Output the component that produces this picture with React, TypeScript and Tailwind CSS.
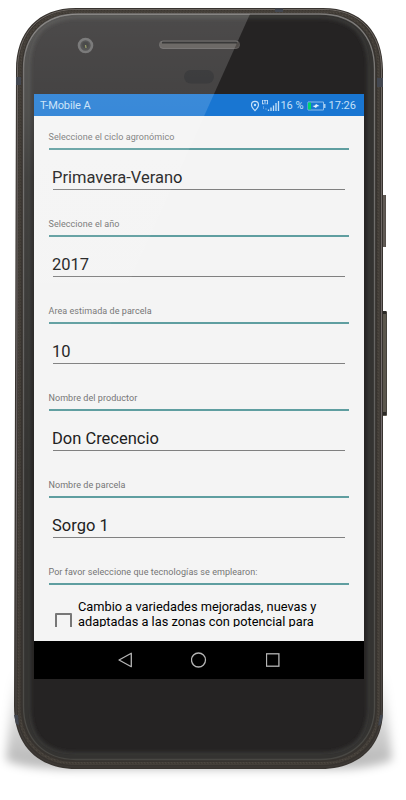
import React from "react";

const fields = [
  { label: "Seleccione el ciclo agronómico", value: "Primavera-Verano" },
  { label: "Seleccione el año", value: "2017" },
  { label: "Area estimada de parcela", value: "10" },
  { label: "Nombre del productor", value: "Don Crecencio" },
  { label: "Nombre de parcela", value: "Sorgo 1" },
];

function PhoneShell() {
  return (
    <svg className="absolute inset-0" width="406" height="800" viewBox="0 0 406 800">
      <defs>
        <filter id="soft" x="-10%" y="-50%" width="120%" height="200%">
          <feGaussianBlur stdDeviation="5" />
        </filter>
        <filter id="edge">
          <feGaussianBlur stdDeviation="2" />
        </filter>
        <pattern id="grain" width="3" height="3" patternUnits="userSpaceOnUse">
          <rect width="3" height="3" fill="#443f39" />
          <rect width="1" height="1" fill="#4d4740" />
          <rect x="2" y="1" width="1" height="1" fill="#3c3731" />
        </pattern>
        <linearGradient id="bevel" x1="0" y1="0" x2="0" y2="1">
          <stop stopColor="#7d7b79" />
          <stop offset=".6" stopColor="#5e5d5b" />
          <stop offset="1" stopColor="#484743" />
        </linearGradient>
        <linearGradient id="rim" x1="0" y1="0" x2="0" y2="1">
          <stop stopColor="#6b6560" />
          <stop offset=".6" stopColor="#756e70" />
          <stop offset="1" stopColor="#3e3935" />
        </linearGradient>
        <linearGradient id="shadow" x1="0" y1="670" x2="0" y2="772" gradientUnits="userSpaceOnUse">
          <stop stopColor="#000" stopOpacity="0" />
          <stop offset="1" stopColor="#000" stopOpacity=".3" />
        </linearGradient>
        <clipPath id="page">
          <rect width="406" height="780" />
        </clipPath>
        <clipPath id="glass">
          <path d="M80 16H318Q370 16 370 68V706Q370 755 320 755H76Q28 755 28 706V68Q28 16 80 16Z" />
        </clipPath>
      </defs>
      <g clipPath="url(#page)">
        <path d="M14 670H384L392 760Q370 769 330 769H70Q20 768 6 760Z" fill="url(#shadow)" filter="url(#soft)" />
      </g>
      <rect x="381" y="195" width="5" height="52" fill="#605a55" />
      <rect x="385" y="195" width="1" height="52" fill="#56504b" />
      <rect x="381" y="311" width="6" height="105" rx="1" fill="#5b574d" />
      <rect x="386" y="312" width="1" height="103" fill="#45423c" />
      <rect x="383" y="311" width="3" height="3" fill="#2b2926" />
      <rect x="383" y="412" width="3" height="3" fill="#2b2926" />
      <path d="M76 8H323C361 8 383 32 383 70V710C383 747 358 769 321 769H76C38 769 14 745 14 706L16 70C16 32 38 8 76 8Z" fill="#37332f" />
      <path d="M76 9.500H323C360 9.500 381.500 33 381.500 70V710C381.500 746 357 767 321 767H76C39 767 16 744 16 706L17.500 70C17.500 33 39 9.500 76 9.500Z" fill="none" stroke="url(#rim)" strokeWidth="1" />
      <path d="M77 11.500H322C357 11.500 378.500 34 378.500 70V708C378.500 742 355 763.500 321 763.500H76C42 763.500 19 742 19 706L20 70C20 34 42 11.500 77 11.500Z" fill="none" stroke="url(#grain)" strokeWidth="3" />
      <path d="M78 14H320C354 14 374.500 35 374.500 69V707C374.500 739 352 759.500 320 759.500H76C44 759.500 23.500 739 23.500 706V69C23.500 35 44 14 78 14Z" fill="#343331" stroke="url(#bevel)" strokeWidth="1.300" />
      <path d="M80 16H318Q370 16 370 68V706Q370 755 320 755H76Q28 755 28 706V68Q28 16 80 16Z" fill="#252323" />
      <g clipPath="url(#glass)">
        <path d="M80 16H318Q370 16 370 68V706Q370 755 320 755H76Q28 755 28 706V68Q28 16 80 16Z" fill="none" stroke="#403f3d" strokeWidth="4" filter="url(#edge)" />
      </g>
      <path d="M275 8.500H283V12H275ZM16 77H21V85H16ZM377 78H383V87H377ZM14 715H18L19 725L16 724ZM380 715H383L381 724L378 726Z" fill="#434750" />
      <rect x="160" y="41.500" width="79" height="7" rx="3" fill="#504c49" />
      <path d="M162 42.500H237" stroke="#111" strokeWidth="2" />
      <rect x="159.500" y="41" width="80" height="7.500" rx="3.500" fill="none" stroke="#706d6b" strokeWidth=".7" />
      <rect x="184" y="70" width="30" height="13.500" rx="6.700" fill="#19191b" />
      <circle cx="85.500" cy="45.500" r="6.500" fill="#343434" stroke="#616161" strokeWidth="2.600" />
      <circle cx="85.500" cy="45" r="3.200" fill="#272727" />
      <path d="M85.500 45l.5 3" stroke="#858c4c" strokeWidth="1.300" />
    </svg>
  );
}

function GlassReflection() {
  return (
    <svg className="pointer-events-none absolute inset-0" width="406" height="800" viewBox="0 0 406 800">
      <defs>
        <linearGradient id="shine" x1="0" y1="14" x2="0" y2="480" gradientUnits="userSpaceOnUse">
          <stop stopColor="#fff" stopOpacity=".18" />
          <stop offset=".21" stopColor="#fff" stopOpacity=".14" />
          <stop offset=".35" stopColor="#fff" stopOpacity=".07" />
          <stop offset="1" stopColor="#fff" stopOpacity="0" />
        </linearGradient>
      </defs>
      <path d="M78 14H250L34 494L24 470V68C24 35 44 14 78 14Z" fill="url(#shine)" />
    </svg>
  );
}

function StatusBar() {
  return (
    <div className="flex h-[22px] shrink-0 items-center bg-[#1976d2] pl-[6px] pr-[7.5px] text-[11px] leading-none text-[#c5e0f8]">
      <span className="mt-px tracking-[-0.1px]">T-Mobile A</span>
      <svg className="ml-auto mt-px" width="30" height="12" viewBox="0 0 30 12" fill="none" stroke="#c5e0f8">
        <path d="M5 10.600C2.500 8 1.500 6.700 1.500 4.900a3.500 3.500 0 0 1 7 0C8.500 6.700 7.500 8 5 10.600Z" strokeWidth="1.200" />
        <circle cx="5" cy="5" r="1.200" fill="#c5e0f8" stroke="none" />
        <path d="M12.500 0V4M12 3.800H14M13.500 .5H16.500M15 .5V4.300M17.500 .5V4M16.500 3.800H18M16.500 .5H18" strokeWidth=".9" />
        <path d="M13.500 6v3M16 8v2" opacity=".4" />
        <path d="M18.500 9.500v1.500M21 7.500v3.500M23.500 5.500v5.500M26 3v8M28.500 1v10" strokeWidth="1.300" />
      </svg>
      <span className="mt-px whitespace-nowrap">16 %</span>
      <svg className="ml-[3px] mt-px" width="19" height="10" viewBox="0 0 19 10">
        <path d="M1 1H16.500V9H1Z" fill="none" stroke="#8dbdea" />
        <path d="M1 1.500H4V8.500H1Z" fill="#00d66b" />
        <path d="M17 3H18.500V7H17" fill="#a7ceef" />
        <path d="M5.500 5L8 4.500L9 3L12.500 5L10 5.500L9 7Z" fill="#e2f1fc" />
      </svg>
      <span className="ml-[3px] mt-px">17:26</span>
    </div>
  );
}

function NavigationBar() {
  return (
    <div className="flex h-[38px] shrink-0 items-center justify-between bg-black pl-[83px] pr-[84px]">
      <svg width="16" height="18" viewBox="0 0 16 18" fill="none" stroke="#b5b5b5" strokeWidth="1.300">
        <path d="M2 9L14.300 2.300V15.700Z" strokeLinejoin="round" />
      </svg>
      <svg width="16" height="18" viewBox="0 0 16 18" fill="none" stroke="#b5b5b5" strokeWidth="1.300">
        <circle cx="7.500" cy="9" r="7" />
      </svg>
      <svg width="14" height="18" viewBox="0 0 14 18" fill="none" stroke="#b5b5b5" strokeWidth="1.300">
        <rect x=".5" y="2.800" width="12.400" height="12.400" />
      </svg>
    </div>
  );
}

function SectionLabel({ text }: { text: string }) {
  return (
    <div className="flex h-[19px] items-start border-b-2 border-[#5f9ea0] text-[9px] leading-[12px] tracking-[0.055px] text-[#757575]">
      <span className="whitespace-nowrap">{text}</span>
    </div>
  );
}

export default function App() {
  return (
    <div className="relative flex h-[800px] w-[406px] flex-col overflow-hidden bg-white font-['Roboto',sans-serif]">
      <PhoneShell />
      <main className="relative ml-[34px] mt-[94px] flex h-[585px] w-[329.5px] flex-col bg-[#f4f4f4]">
        <StatusBar />
        <div className="min-h-0 flex-1 pb-[14px]">
          <div className="h-full overflow-hidden pl-[14.500px] pr-[14.500px] pt-[15px]">
            {fields.map((field) => (
              <section key={field.label} className="h-[87px]">
                <SectionLabel text={field.label} />
                <div className="mx-[4px] h-[40px] border-b border-[#808080] pt-[18px] text-[16.5px] leading-[20px] text-[#212121]">
                  <span className="-ml-[0.5px]">{field.value}</span>
                </div>
              </section>
            ))}
            <SectionLabel text="Por favor seleccione que tecnologías se emplearon:" />
            <div className="flex pl-[6px] pt-[14px]">
              <div className="mt-[14px] h-[17px] w-[17px] shrink-0 rounded-[1px] border-2 border-[#777]" />
              <p className="ml-[6.5px] whitespace-nowrap text-[12.8px] leading-[15px] text-black">
                Cambio a variedades mejoradas, nuevas y
                <br />
                adaptadas a las zonas con potencial para
              </p>
            </div>
          </div>
        </div>
        <NavigationBar />
      </main>
      <GlassReflection />
    </div>
  );
}
